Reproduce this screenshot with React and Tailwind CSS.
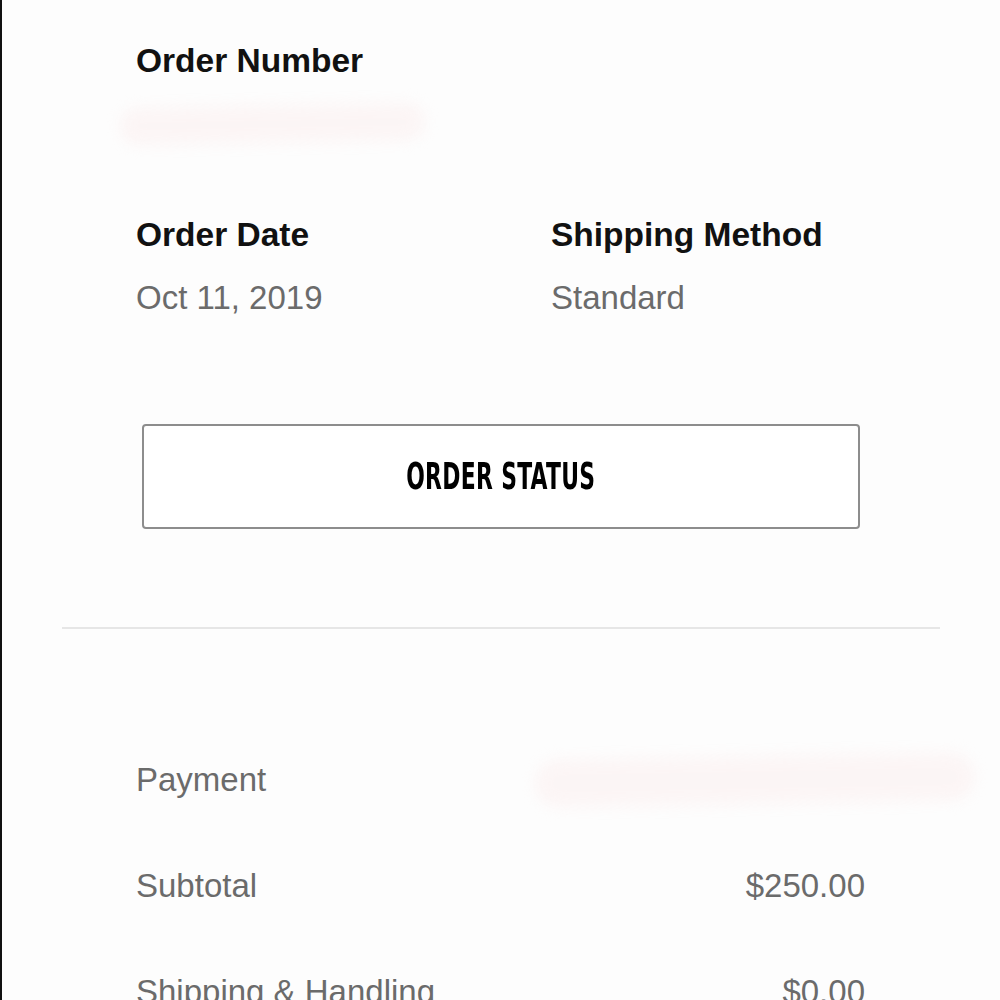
import React from 'react';

const Smudge = ({ className }) => (
  <div className={`rounded-full bg-[#fbeeee] opacity-50 blur-[7px] ${className}`} />
);

const Row = ({ label, children }) => (
  <div className="flex h-[40px] items-center justify-between">
    <span className="text-[33px] leading-[40px] text-[#6b6b6b]">{label}</span>
    {children}
  </div>
);

export default function App() {
  return (
    <div
      className="h-[1000px] w-[1000px] overflow-hidden border-l-2 border-[#111] bg-[#fdfdfd]"
      style={{ fontFamily: '"Liberation Sans", Arial, sans-serif' }}
    >
      {/* Order summary */}
      <div className="pl-[134px] pt-[41px]">
        <h2 className="text-[33.5px] font-bold leading-[40px] text-[#111]">Order Number</h2>
        <Smudge className="ml-[-16px] mt-[24px] h-[38px] w-[305px] -rotate-1" />
        <div className="mt-[72px] flex">
          <div className="w-[415px]">
            <h3 className="text-[33.5px] font-bold leading-[40px] text-[#111]">Order Date</h3>
            <p className="mt-[23px] text-[33px] leading-[40px] text-[#6b6b6b]">Oct 11, 2019</p>
          </div>
          <div>
            <h3 className="text-[33.5px] font-bold leading-[40px] text-[#111]">Shipping Method</h3>
            <p className="mt-[23px] text-[33px] leading-[40px] text-[#6b6b6b]">Standard</p>
          </div>
        </div>
      </div>

      <div className="mt-[106px] px-[140px]">
        <button className="flex h-[105px] w-full items-center justify-center rounded-[4px] border-2 border-[#8d8d8d] bg-white">
          <span
            className="inline-block scale-x-[0.64] text-[38px] font-bold tracking-[0.5px] text-black"
            style={{ fontFamily: '"DejaVu Sans Condensed", "DejaVu Sans", sans-serif' }}
          >
            ORDER STATUS
          </span>
        </button>
      </div>

      <div className="mx-[60px] mt-[98px] h-[2px] bg-[#e6e6e6]" />

      {/* Totals */}
      <div className="flex flex-col gap-[66px] pl-[134px] pr-[135px] pt-[131px]">
        <Row label="Payment">
          <Smudge className="mr-[-110px] h-[48px] w-[440px] -rotate-1" />
        </Row>
        <Row label="Subtotal">
          <span className="text-[33px] leading-[40px] text-[#6b6b6b]">$250.00</span>
        </Row>
        <Row label="Shipping & Handling">
          <span className="text-[33px] leading-[40px] text-[#6b6b6b]">$0.00</span>
        </Row>
      </div>
    </div>
  );
}
